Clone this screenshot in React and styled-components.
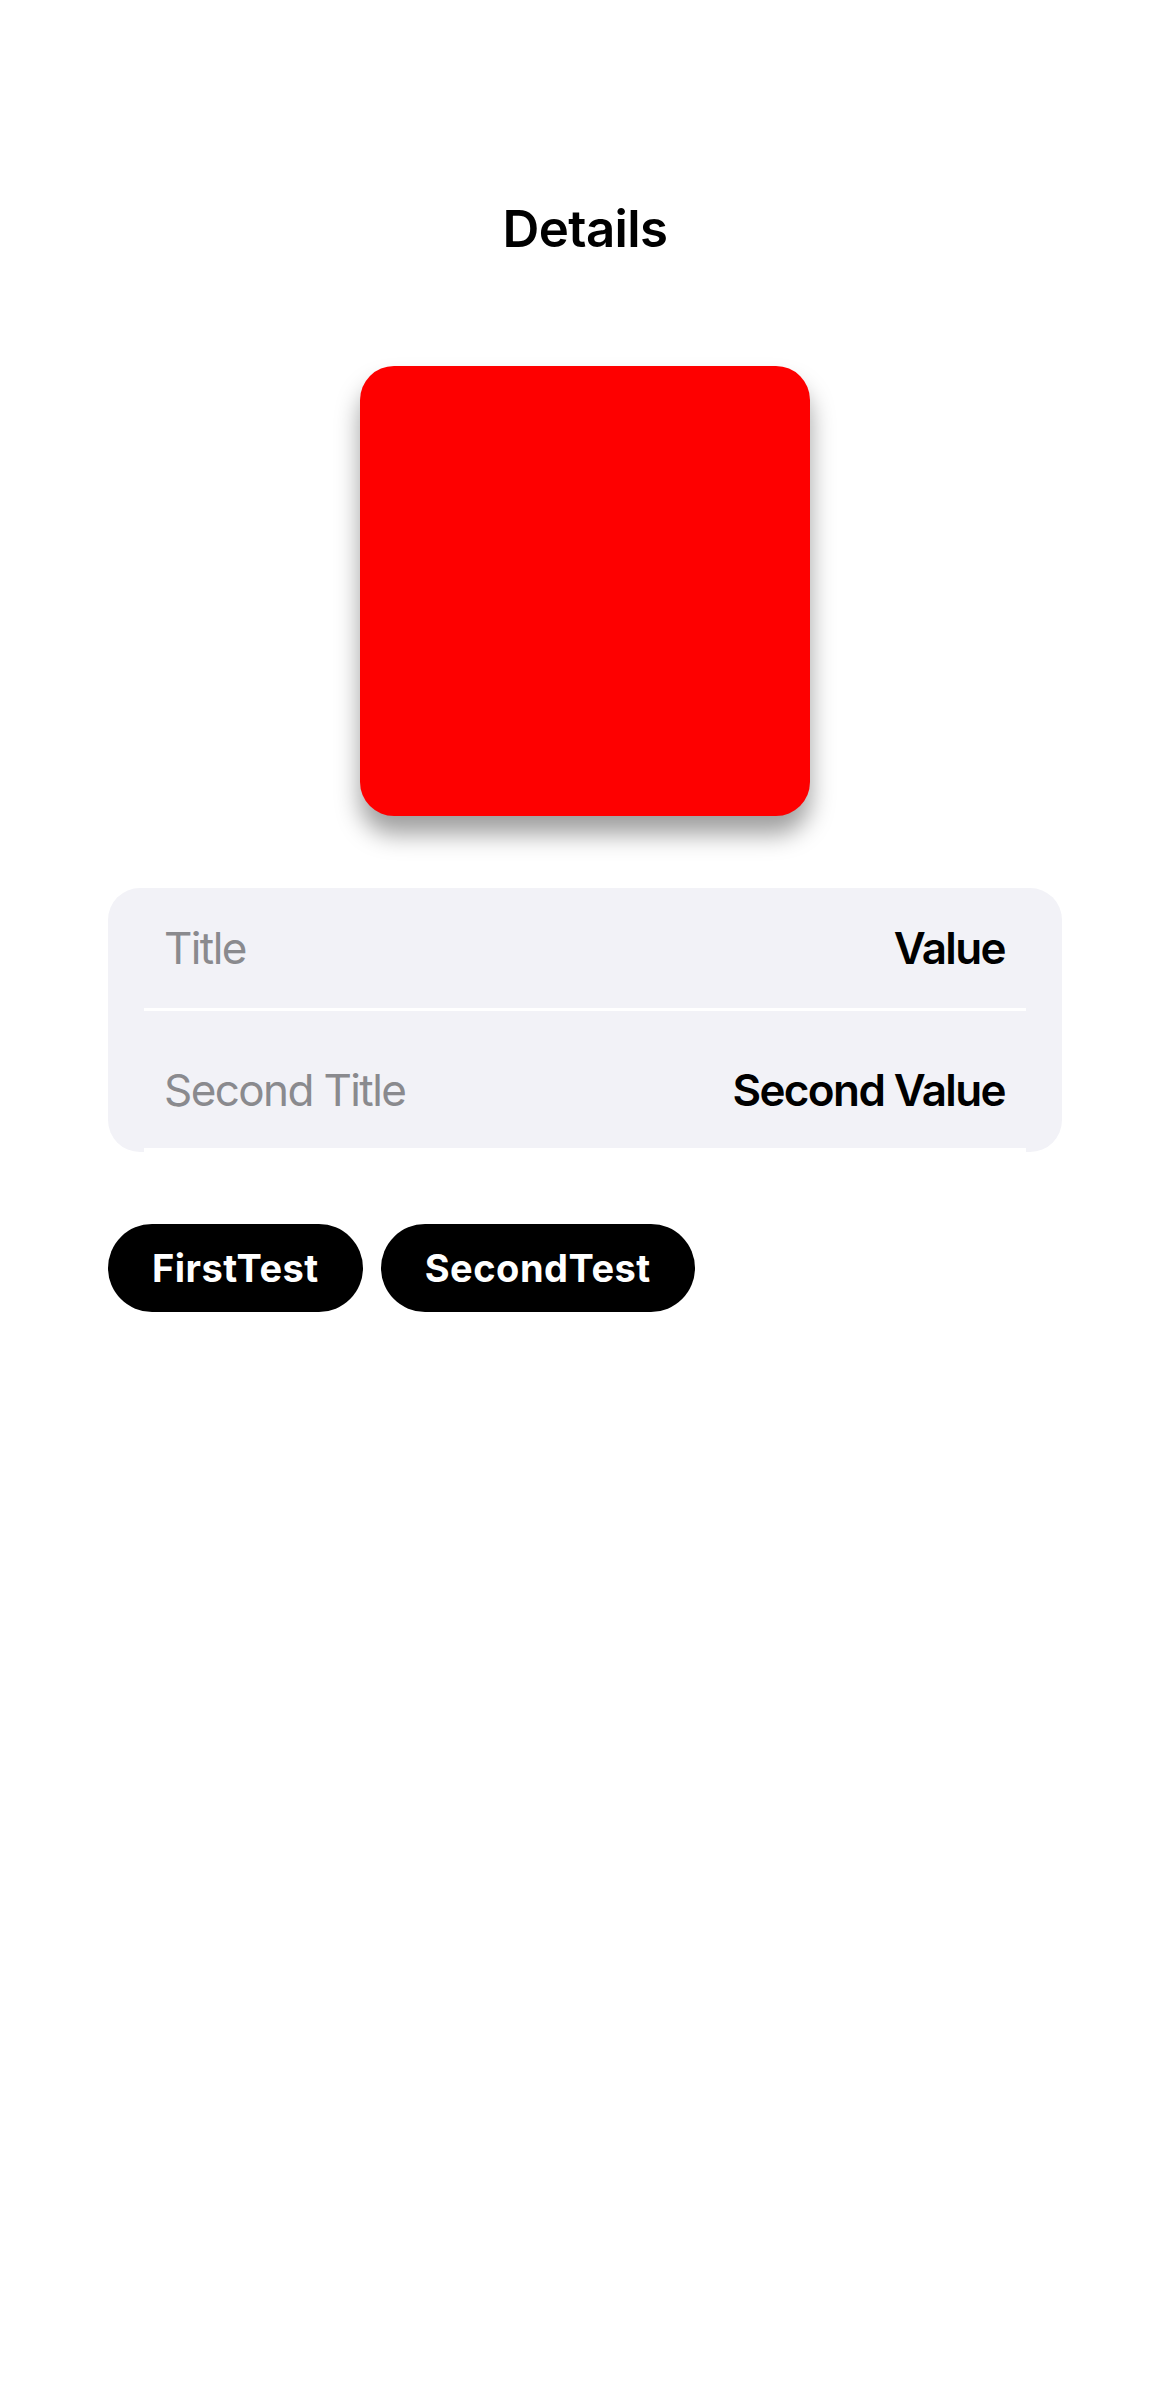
import React from "react";
import styled, { createGlobalStyle } from "styled-components";

const GlobalStyle = createGlobalStyle`
  html, body {
    margin: 0;
    padding: 0;
    background: #ffffff;
  }
  body {
    font-family: Inter, "Noto Sans", "Liberation Sans", sans-serif;
    -webkit-font-smoothing: antialiased;
  }
`;

const rows = [
  { title: "Title", value: "Value" },
  { title: "Second Title", value: "Second Value" },
];

const tags = ["FirstTest", "SecondTest"];

export default function App() {
  return (
    <>
      <GlobalStyle />
      <Page>
        <Header>Details</Header>
        <Preview />
        <Content>
          <Card>
            <Row>
              <Label>{rows[0].title}</Label>
              <Value>{rows[0].value}</Value>
            </Row>
            <Separator />
            <Row $last>
              <Label>{rows[1].title}</Label>
              <Value>{rows[1].value}</Value>
            </Row>
          </Card>
          <Tags>
            {tags.map((t) => (
              <Tag key={t}>{t}</Tag>
            ))}
          </Tags>
        </Content>
      </Page>
    </>
  );
}

const Page = styled.div`
  width: 1170px;
  min-height: 2391px;
  display: flex;
  flex-direction: column;
  align-items: center;
  padding-top: 198px;
  box-sizing: border-box;
  background: #ffffff;
`;

const Header = styled.h1`
  margin: 0;
  font-size: 51px;
  line-height: 62px;
  font-weight: 600;
  color: #000000;
  letter-spacing: -0.6px;
`;

const Preview = styled.div`
  width: 450px;
  height: 450px;
  margin-top: 106px;
  border-radius: 34px;
  background: #fe0000;
  box-shadow: 0 18px 24px rgba(0, 0, 0, 0.38);
`;

const Content = styled.div`
  width: 100%;
  padding: 0 108px;
  box-sizing: border-box;
  margin-top: 72px;
`;

const Card = styled.div`
  position: relative;
  background: #f2f2f7;
  border-radius: 32px;
  overflow: hidden;

  &::after {
    content: "";
    position: absolute;
    left: 36px;
    right: 36px;
    bottom: 0;
    height: 4px;
    background: #ffffff;
  }
`;

const Row = styled.div`
  display: flex;
  align-items: center;
  justify-content: space-between;
  box-sizing: border-box;
  height: ${(p) => (p.$last ? "141px" : "120px")};
  padding: ${(p) => (p.$last ? "17px 57px 0 56px" : "0 57px 0 56px")};
`;

const Separator = styled.div`
  height: 3px;
  margin: 0 36px;
  background: #ffffff;
`;

const Label = styled.span`
  font-size: 44px;
  font-weight: 400;
  letter-spacing: -1.6px;
  color: #8a8a8e;
`;

const Value = styled.span`
  font-size: 44px;
  font-weight: 600;
  letter-spacing: -1.6px;
  color: #000000;
`;

const Tags = styled.div`
  display: flex;
  gap: 18px;
  margin-top: 72px;
`;

const Tag = styled.div`
  height: 88px;
  padding: 0 44px;
  border-radius: 44px;
  background: #000000;
  color: #ffffff;
  font-size: 38px;
  font-weight: 700;
  letter-spacing: 0.5px;
  display: flex;
  align-items: center;
`;
